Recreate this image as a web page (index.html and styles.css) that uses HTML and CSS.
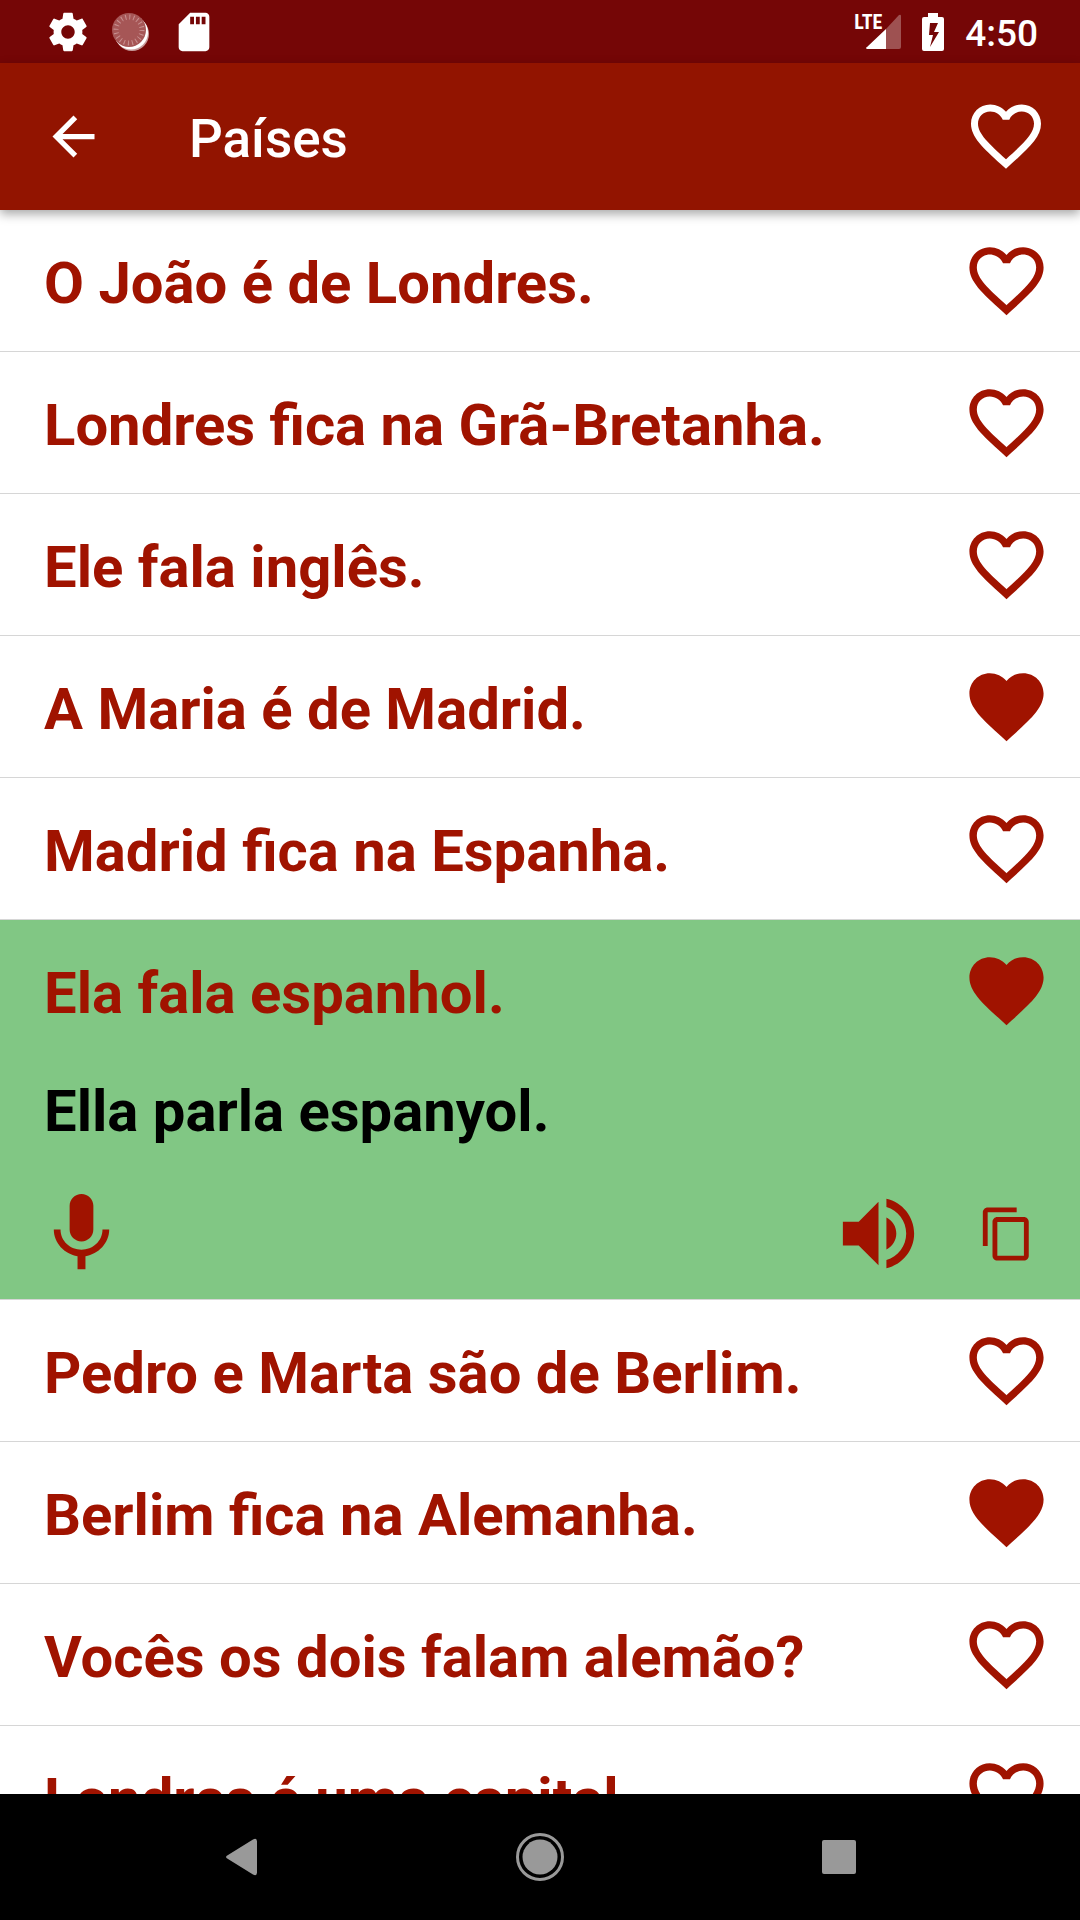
FILE: index.html
```html
<!DOCTYPE html>
<html lang="pt">
<head>
<meta charset="utf-8">
<meta name="viewport" content="width=device-width, initial-scale=1">
<title>Países</title>
<link rel="stylesheet" href="styles.css">
</head>
<body>
<svg class="sprite" aria-hidden="true">
  <symbol id="heart-outline" viewBox="0 0 24 24"><path d="M16.5 3c-1.74 0-3.41.81-4.5 2.09C10.91 3.81 9.24 3 7.5 3 4.42 3 2 5.42 2 8.5c0 3.78 3.4 6.86 8.55 11.54L12 21.35l1.45-1.32C18.6 15.36 22 12.28 22 8.5 22 5.42 19.58 3 16.5 3zm-4.4 15.55l-.1.1-.1-.1C7.14 14.24 4 11.39 4 8.5 4 6.5 5.5 5 7.5 5c1.54 0 3.04.99 3.57 2.36h1.87C13.46 5.99 14.96 5 16.5 5c2 0 3.5 1.5 3.5 3.5 0 2.89-3.14 5.74-7.9 10.05z"/></symbol>
  <symbol id="heart-full" viewBox="0 0 24 24"><path d="M12 21.35l-1.45-1.32C5.4 15.36 2 12.28 2 8.5 2 5.42 4.42 3 7.5 3c1.74 0 3.41.81 4.5 2.09C13.09 3.81 14.76 3 16.5 3 19.58 3 22 5.42 22 8.5c0 3.78-3.4 6.86-8.55 11.54L12 21.35z"/></symbol>
</svg>

<div class="status-bar">
  <div class="status-group notifications">
    <svg class="status-icon" viewBox="0 0 24 24" aria-hidden="true"><path d="M19.43 12.98c.04-.32.07-.64.07-.98s-.03-.66-.07-.98l2.11-1.65c.19-.15.24-.42.12-.64l-2-3.46c-.12-.22-.39-.3-.61-.22l-2.49 1c-.52-.4-1.08-.73-1.69-.98l-.38-2.65C14.46 2.18 14.25 2 14 2h-4c-.25 0-.46.18-.49.42l-.38 2.65c-.61.25-1.17.59-1.69.98l-2.49-1c-.23-.09-.49 0-.61.22l-2 3.46c-.13.22-.07.49.12.64l2.11 1.65c-.04.32-.07.65-.07.98s.03.66.07.98l-2.11 1.65c-.19.15-.24.42-.12.64l2 3.46c.12.22.39.3.61.22l2.49-1c.52.4 1.08.73 1.69.98l.38 2.65c.03.24.24.42.49.42h4c.25 0 .46-.18.49-.42l.38-2.65c.61-.25 1.17-.59 1.69-.98l2.49 1c.23.09.49 0 .61-.22l2-3.46c.12-.22.07-.49-.12-.64l-2.11-1.65zM12 15.5c-1.93 0-3.5-1.57-3.5-3.5s1.57-3.5 3.5-3.5 3.5 1.57 3.5 3.5-1.57 3.5-3.5 3.5z"/></svg>
    <svg class="status-icon" viewBox="0 0 46 46" aria-hidden="true">
      <circle cx="24" cy="25" r="17" fill-opacity=".6"/>
      <circle cx="23" cy="23.500" r="17" />
      <circle cx="21" cy="21" r="17" fill="#a65656"/>
      <circle cx="21" cy="21" r="13" fill="none" stroke="#c89090" stroke-width="5" stroke-dasharray="1 3.080"/>
    </svg>
    <svg class="status-icon" viewBox="0 0 24 24" aria-hidden="true"><path d="M18 2h-8L4.020 8 4 20c0 1.100.9 2 2 2h12c1.100 0 2-.9 2-2V4c0-1.100-.9-2-2-2zm-6 6h-2V4h2v4zm3 0h-2V4h2v4zm3 0h-2V4h2v4z"/></svg>
  </div>
  <div class="status-group">
    <div class="signal">
      <svg class="signal-icon" viewBox="0 0 35 35" aria-hidden="true"><path fill-opacity=".3" d="M35 2v31q0 2-2 2H20V15L33 1q2-1 2 1z"/><path d="M20 15v20H1q-2-1 0-2z"/></svg>
      <span class="network">LTE</span>
    </div>
    <svg class="battery-icon" viewBox="0 0 22 38" aria-hidden="true"><path fill-rule="evenodd" d="M6 0h10v4h4q2 0 2 2v30q0 2-2 2H2q-2 0-2-2V6q0-2 2-2h4zM8 10L7 22h4L8 34l9-15h-5l4-9z"/></svg>
    <time class="clock">4:50</time>
  </div>
</div>

<header class="app-bar">
  <button class="icon-button back" aria-label="Voltar"><svg viewBox="0 0 24 24"><path d="M20 11H7.830l5.590-5.590L12 4l-8 8 8 8 1.410-1.410L7.830 13H20v-2z"/></svg></button>
  <h1 class="title">Países</h1>
  <button class="icon-button favorites" aria-label="Favoritos"><svg><use href="#heart-outline"/></svg></button>
</header>

<main class="content">
  <ul class="phrases">
    <li class="phrase"><div class="phrase-row"><p class="text">O João é de Londres.</p><button class="icon-button heart" aria-label="Favorito"><svg><use href="#heart-outline"/></svg></button></div></li>
    <li class="phrase"><div class="phrase-row"><p class="text">Londres fica na Grã-Bretanha.</p><button class="icon-button heart" aria-label="Favorito"><svg><use href="#heart-outline"/></svg></button></div></li>
    <li class="phrase"><div class="phrase-row"><p class="text">Ele fala inglês.</p><button class="icon-button heart" aria-label="Favorito"><svg><use href="#heart-outline"/></svg></button></div></li>
    <li class="phrase"><div class="phrase-row"><p class="text">A Maria é de Madrid.</p><button class="icon-button heart" aria-label="Favorito" aria-pressed="true"><svg><use href="#heart-full"/></svg></button></div></li>
    <li class="phrase"><div class="phrase-row"><p class="text">Madrid fica na Espanha.</p><button class="icon-button heart" aria-label="Favorito"><svg><use href="#heart-outline"/></svg></button></div></li>
    <li class="phrase open">
      <div class="phrase-row"><p class="text">Ela fala espanhol.</p><button class="icon-button heart" aria-label="Favorito" aria-pressed="true"><svg><use href="#heart-full"/></svg></button></div>
      <p class="text translation" lang="ca">Ella parla espanyol.</p>
      <div class="actions">
        <button class="icon-button large" aria-label="Gravar"><svg viewBox="0 0 24 24"><path d="M12 14c1.660 0 2.990-1.340 2.990-3L15 5c0-1.660-1.340-3-3-3S9 3.340 9 5v6c0 1.660 1.340 3 3 3zm5.300-3c0 3-2.540 5.100-5.300 5.100S6.700 14 6.700 11H5c0 3.410 2.720 6.230 6 6.720V21h2v-3.280c3.280-.48 6-3.300 6-6.720h-1.700z"/></svg></button>
        <button class="icon-button large speak" aria-label="Ouvir"><svg viewBox="0 0 24 24"><path d="M3 9v6h4l5 5V4L7 9H3zm13.500 3c0-1.770-1.020-3.290-2.500-4.030v8.050c1.480-.73 2.500-2.250 2.500-4.020zM14 3.230v2.060c2.890.86 5 3.540 5 6.710s-2.110 5.850-5 6.710v2.060c4.010-.91 7-4.490 7-8.770s-2.990-7.860-7-8.770z"/></svg></button>
        <button class="icon-button copy" aria-label="Copiar"><svg viewBox="0 0 24 24"><path d="M16 1H4c-1.100 0-2 .9-2 2v14h2V3h12V1zm3 4H8c-1.100 0-2 .9-2 2v14c0 1.100.9 2 2 2h11c1.100 0 2-.9 2-2V7c0-1.100-.9-2-2-2zm0 16H8V7h11v14z"/></svg></button>
      </div>
    </li>
    <li class="phrase"><div class="phrase-row"><p class="text">Pedro e Marta são de Berlim.</p><button class="icon-button heart" aria-label="Favorito"><svg><use href="#heart-outline"/></svg></button></div></li>
    <li class="phrase"><div class="phrase-row"><p class="text">Berlim fica na Alemanha.</p><button class="icon-button heart" aria-label="Favorito" aria-pressed="true"><svg><use href="#heart-full"/></svg></button></div></li>
    <li class="phrase"><div class="phrase-row"><p class="text">Vocês os dois falam alemão?</p><button class="icon-button heart" aria-label="Favorito"><svg><use href="#heart-outline"/></svg></button></div></li>
    <li class="phrase"><div class="phrase-row"><p class="text">Londres é uma capital.</p><button class="icon-button heart" aria-label="Favorito"><svg><use href="#heart-outline"/></svg></button></div></li>
  </ul>
</main>

<nav class="nav-bar" aria-label="Sistema">
  <button class="nav-button" aria-label="Voltar"><svg viewBox="0 0 48 48"><path d="M36 6.500q4-2 4 2v31q0 4-4 2L11 26q-4-2 0-4z"/></svg></button>
  <button class="nav-button" aria-label="Início"><svg viewBox="0 0 48 48"><circle cx="24" cy="24" r="17.500"/><circle cx="24" cy="24" r="22.500" fill="none" stroke="currentColor" stroke-width="3"/></svg></button>
  <button class="nav-button" aria-label="Recentes"><svg viewBox="0 0 48 48"><rect x="7" y="7" width="34" height="34" rx="2"/></svg></button>
</nav>
</body>
</html>
```
FILE: styles.css
```css
:root {
  --red: #a01300;
  --bar: #921400;
  --status: #750606;
  --green: #81c784;
  --line: #d6d6d6;
}

* {
  box-sizing: border-box;
}

body {
  margin: 0;
  height: 100vh;
  display: flex;
  flex-direction: column;
  background: #fff;
  color: var(--red);
  font-family: Roboto, "Liberation Sans", sans-serif;
}

h1,
p,
ul {
  margin: 0;
  padding: 0;
}

svg {
  display: block;
  fill: currentColor;
}

.sprite {
  display: none;
}

button {
  border: 0;
  padding: 0;
  background: none;
  color: inherit;
  font: inherit;
}

.status-bar {
  flex: none;
  height: 63px;
  display: flex;
  align-items: center;
  justify-content: space-between;
  padding: 0 42px 0 45px;
  background: var(--status);
  color: #fff;
}

.status-group {
  display: flex;
  align-items: center;
  gap: 21px;
}

.notifications {
  gap: 17px;
}

.status-icon {
  width: 46px;
  height: 46px;
}

.signal {
  position: relative;
  padding-left: 12px;
}

.signal-icon {
  width: 35px;
  height: 35px;
}

.network {
  position: absolute;
  left: 0;
  top: -4px;
  font: bold 20px/24px "Liberation Sans Narrow", "Roboto Condensed", "Open Sans Condensed", "Liberation Sans", sans-serif;
}

.battery-icon {
  width: 22px;
  height: 38px;
}

.clock {
  padding-top: 4px;
  font-size: 37px;
  line-height: 44px;
  font-weight: 500;
}

.app-bar {
  position: relative;
  z-index: 1;
  flex: none;
  height: 147px;
  display: flex;
  align-items: center;
  padding: 0 32px 0 42px;
  background: var(--bar);
  color: #fff;
  box-shadow: 0 4px 10px rgba(0, 0, 0, 0.35);
}

.title {
  flex: 1;
  margin-left: 84px;
  padding-top: 4px;
  font-size: 53px;
  line-height: 62px;
  font-weight: 500;
}

.icon-button {
  flex: none;
  display: flex;
  align-items: center;
  justify-content: center;
}

.icon-button svg {
  width: 100%;
  height: 100%;
}

.back {
  width: 63px;
  height: 63px;
}

.favorites {
  width: 84px;
  height: 84px;
  margin-bottom: 2px;
}

.content {
  flex: 1;
  min-height: 0;
  overflow: hidden;
}

.phrases {
  list-style: none;
}

.phrase {
  border-bottom: 1px solid var(--line);
}

.phrase-row {
  display: flex;
  align-items: flex-start;
  justify-content: space-between;
  padding: 26px 29px 26px 44px;
}

.text {
  font-size: 58px;
  line-height: 68px;
  font-weight: 700;
}

.phrase-row .text {
  padding-top: 13px;
}

.heart {
  width: 89px;
  height: 89px;
}

.open {
  background: var(--green);
}

.translation {
  padding: 16px 44px 41px;
  color: #000;
}

.actions {
  display: flex;
  align-items: center;
  padding: 0 29px 18px 34px;
}

.large {
  width: 95px;
  height: 95px;
}

.speak {
  margin-left: auto;
  margin-right: 36px;
}

.copy {
  width: 89px;
  height: 89px;
}

.copy svg {
  width: 58px;
  height: 58px;
}

.nav-bar {
  flex: none;
  height: 126px;
  display: grid;
  grid-template-columns: repeat(3, 1fr);
  align-items: center;
  padding: 0 92px 0 91px;
  background: #000;
  color: #999;
}

.nav-button {
  justify-self: center;
}

.nav-button svg {
  width: 48px;
  height: 48px;
}
```
